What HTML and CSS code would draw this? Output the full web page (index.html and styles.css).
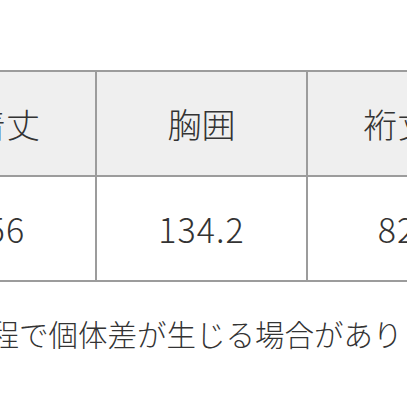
FILE: index.html
```html
<!DOCTYPE html>
<html lang="ja">
<head>
<meta charset="utf-8">
<link rel="stylesheet" href="styles.css">
</head>
<body>
<div class="page">
  <table class="size-table">
    <colgroup>
      <col class="col-side">
      <col class="col-mid">
      <col class="col-right">
    </colgroup>
    <thead>
      <tr>
        <th>着丈</th>
        <th>胸囲</th>
        <th>裄丈</th>
      </tr>
    </thead>
    <tbody>
      <tr>
        <td>56</td>
        <td class="num">134.2</td>
        <td>82</td>
      </tr>
    </tbody>
  </table>
  <p class="note">工程で個体差が生じる場合があります。</p>
</div>
</body>
</html>
```
FILE: styles.css
```css
html, body {
  margin: 0;
  padding: 0;
  background: #ffffff;
  overflow: hidden;
}
.page {
  width: 407px;
  height: 407px;
  overflow: hidden;
  font-family: "Noto Sans CJK JP", "Noto Sans", sans-serif;
  font-weight: 300;
  color: #333333;
  padding-top: 70px;
  box-sizing: border-box;
}
.size-table {
  border-collapse: separate;
  border-spacing: 0;
  margin-left: -85px;
  width: 571px;
  min-width: 571px;
  border-top: 2px solid #9c9c9c;
  border-left: 2px solid #9c9c9c;
  table-layout: fixed;
}
.size-table th,
.size-table td {
  height: 103px;
  padding: 0;
  border-right: 2px solid #9c9c9c;
  border-bottom: 2px solid #9c9c9c;
  text-align: center;
  vertical-align: middle;
  font-size: 34px;
  font-weight: 300;
  line-height: 1;
  white-space: nowrap;
}
.size-table th {
  background: #efefef;
}
.size-table td {
  background: #ffffff;
  letter-spacing: 1px;
}
.col-side { width: 180px; }
.col-mid { width: 211px; }
.col-right { width: 180px; }
.note {
  margin: 31px 0 0 -40px;
  font-size: 29.5px;
  line-height: 40px;
  white-space: nowrap;
}
```
